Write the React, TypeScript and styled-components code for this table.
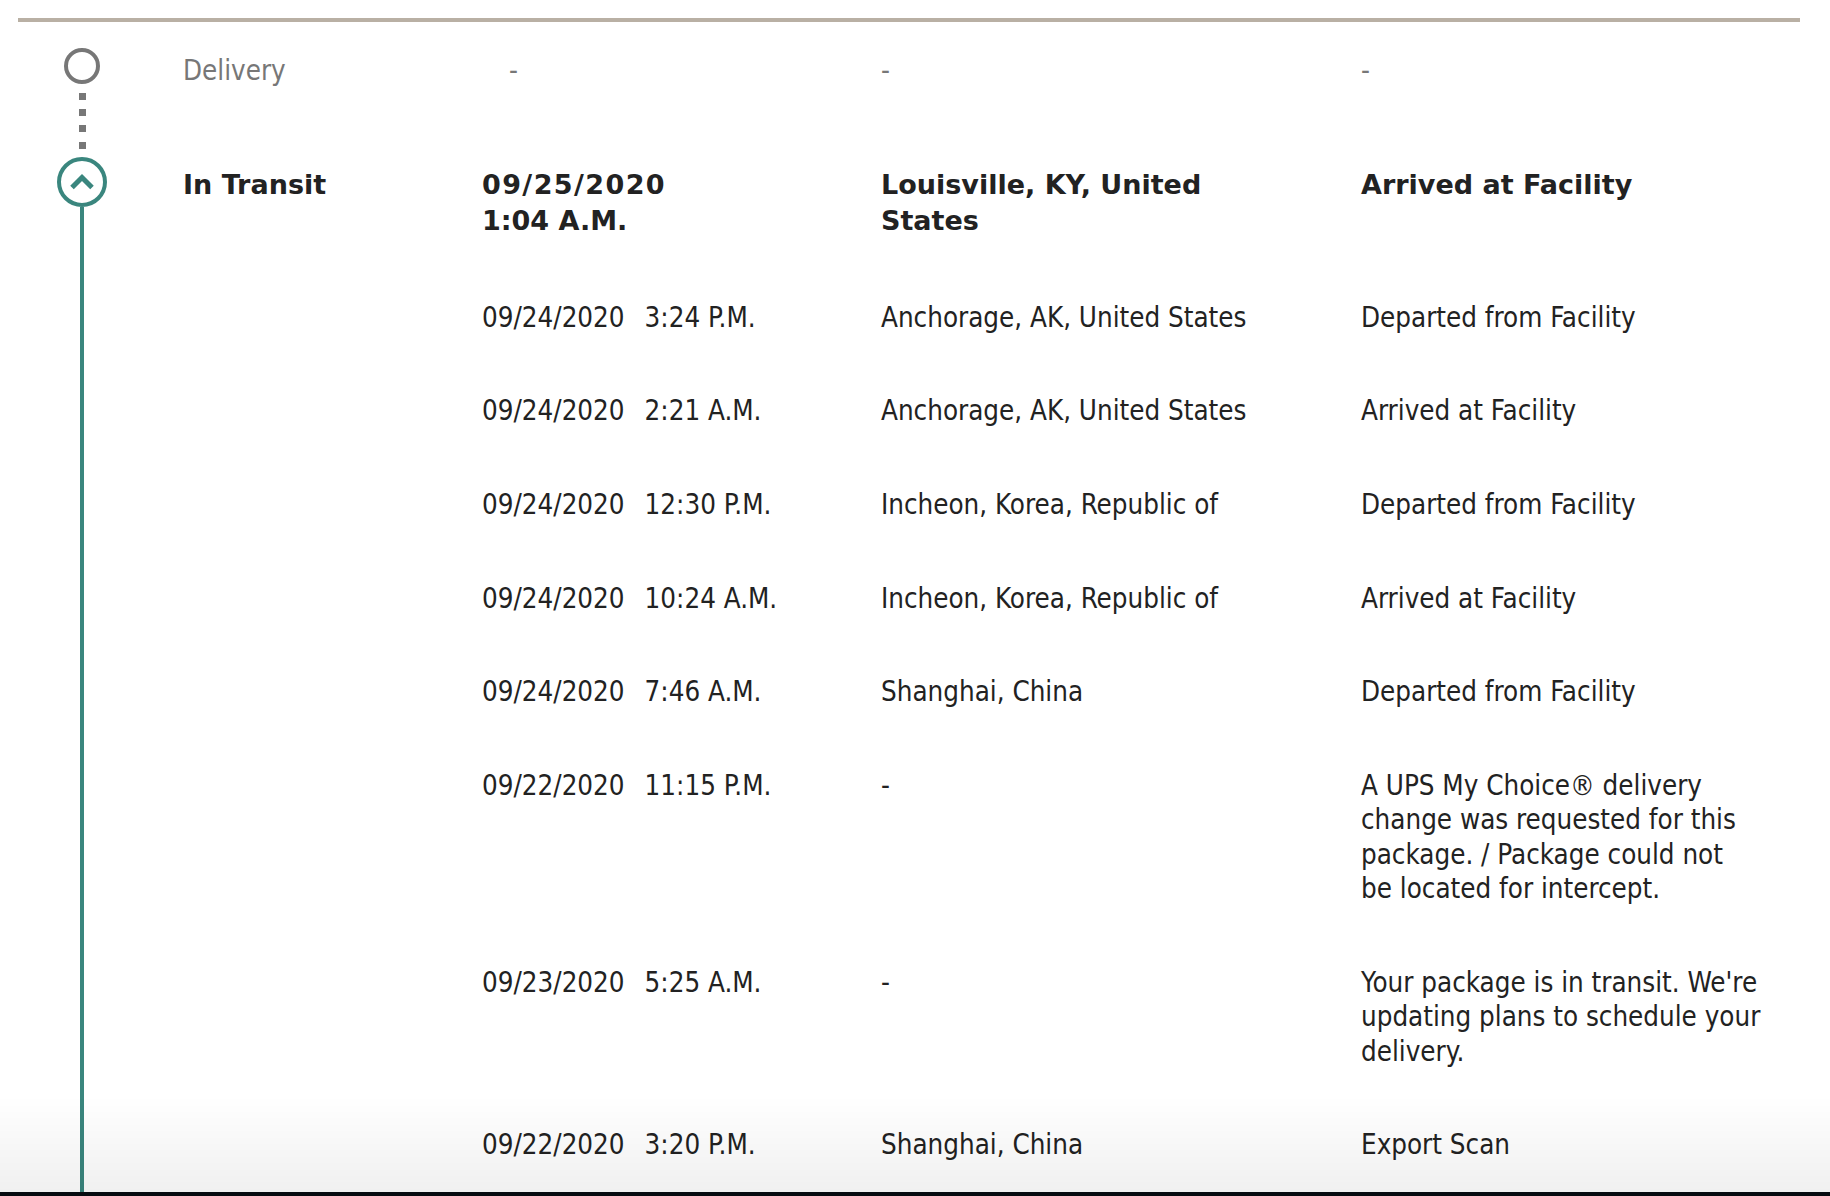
import styled, { createGlobalStyle } from 'styled-components';

const GlobalStyle = createGlobalStyle`
  html, body {
    margin: 0;
    padding: 0;
    background: #fff;
    overflow: hidden;
  }
`;

const Page = styled.main`
  padding: 18px 30px 0 18px;
  font-family: "DejaVu Sans Condensed", "DejaVu Sans", sans-serif;
  font-size: 27.5px;
  line-height: 34.4px;
  color: #222;
`;

const Rule = styled.hr`
  border: 0;
  height: 4px;
  margin: 0 0 26px;
  background: #b9b0a4;
`;

const Stage = styled.section`
  display: grid;
  grid-template-columns: 128px 336px 1fr;
  align-items: stretch;
`;

const Marker = styled.div`
  display: flex;
  flex-direction: column;
  align-items: center;
`;

const Connector = styled.span<{ $dotted?: boolean }>`
  flex: 1;
  width: ${({ $dotted }) => ($dotted ? '7px' : '4px')};
  background: ${({ $dotted }) =>
    $dotted
      ? 'repeating-linear-gradient(to bottom, transparent 0 8.7px, #777 8.7px 15.7px, transparent 15.7px 16.4px)'
      : '#3a867e'};
`;

const Status = styled.div<{ $top: number; $active?: boolean }>`
  padding: ${({ $top }) => $top}px 0 0 37px;
  font-family: ${({ $active }) => ($active ? '"DejaVu Sans", sans-serif' : 'inherit')};
  font-size: ${({ $active }) => ($active ? '27px' : 'inherit')};
  font-weight: ${({ $active }) => ($active ? 700 : 400)};
  line-height: ${({ $active }) => ($active ? '36px' : 'inherit')};
  color: ${({ $active }) => ($active ? '#222' : '#777')};
`;

const Events = styled.div<{ $top: number }>`
  padding-top: ${({ $top }) => $top}px;
`;

const EventRow = styled.div<{ $head?: boolean; $muted?: boolean; $pad?: number }>`
  display: grid;
  grid-template-columns: 399px 480px 1fr;
  padding-bottom: ${({ $pad }) => $pad ?? 59.3}px;
  font-family: ${({ $head }) => ($head ? '"DejaVu Sans", sans-serif' : 'inherit')};
  font-size: ${({ $head }) => ($head ? '27px' : 'inherit')};
  font-weight: ${({ $head }) => ($head ? 700 : 400)};
  line-height: ${({ $head }) => ($head ? '36px' : 'inherit')};
  color: ${({ $muted }) => ($muted ? '#777' : '#222')};
`;

const When = styled.div<{ $stack?: boolean; $indent?: number }>`
  display: flex;
  flex-direction: ${({ $stack }) => ($stack ? 'column' : 'row')};
  gap: ${({ $stack }) => ($stack ? '0' : '20px')};
  padding-left: ${({ $indent }) => $indent ?? 0}px;
`;

const Day = styled.span<{ $wide?: boolean }>`
  letter-spacing: ${({ $wide }) => ($wide ? '1.4px' : 'normal')};
`;

const Where = styled.div`
  padding-right: 60px;
`;

const What = styled.div`
  max-width: 420px;
  white-space: pre-line;
`;

const Fade = styled.div`
  position: fixed;
  left: 0;
  right: 0;
  bottom: 0;
  height: 100px;
  pointer-events: none;
  background: linear-gradient(to bottom, rgba(0, 0, 0, 0), rgba(0, 0, 0, 0.06));
  border-bottom: 4px solid #070b10;
  box-sizing: border-box;
`;

function OpenRing() {
  return (
    <svg width="36" height="36" viewBox="0 0 36 36">
      <circle cx="18" cy="18" r="16" fill="#fff" stroke="#777" strokeWidth="4" />
    </svg>
  );
}

function ActiveRing() {
  return (
    <svg width="50" height="50" viewBox="0 0 50 50">
      <circle cx="25" cy="25" r="23" fill="#fff" stroke="#3a867e" strokeWidth="4" />
      <polyline points="15,30.5 25,20.5 35,30.5" fill="none" stroke="#3a867e" strokeWidth="5" />
    </svg>
  );
}

type Scan = { date: string; time: string; place: string; activity: string };

const latest: Scan = {
  date: '09/25/2020',
  time: '1:04 A.M.',
  place: 'Louisville, KY, United States',
  activity: 'Arrived at Facility',
};

const history: Scan[] = [
  { date: '09/24/2020', time: '3:24 P.M.', place: 'Anchorage, AK, United States', activity: 'Departed from Facility' },
  { date: '09/24/2020', time: '2:21 A.M.', place: 'Anchorage, AK, United States', activity: 'Arrived at Facility' },
  { date: '09/24/2020', time: '12:30 P.M.', place: 'Incheon, Korea, Republic of', activity: 'Departed from Facility' },
  { date: '09/24/2020', time: '10:24 A.M.', place: 'Incheon, Korea, Republic of', activity: 'Arrived at Facility' },
  { date: '09/24/2020', time: '7:46 A.M.', place: 'Shanghai, China', activity: 'Departed from Facility' },
  {
    date: '09/22/2020',
    time: '11:15 P.M.',
    place: '-',
    activity:
      'A UPS My Choice® delivery\nchange was requested for this\npackage. / Package could not\nbe located for intercept.',
  },
  {
    date: '09/23/2020',
    time: '5:25 A.M.',
    place: '-',
    activity: "Your package is in transit. We're\nupdating plans to schedule your\ndelivery.",
  },
  { date: '09/22/2020', time: '3:20 P.M.', place: 'Shanghai, China', activity: 'Export Scan' },
];

export default function App() {
  return (
    <>
      <GlobalStyle />
      <Page>
        <Rule />

        <Stage>
          <Marker>
            <OpenRing />
            <Connector $dotted />
          </Marker>
          <Status $top={5}>Delivery</Status>
          <Events $top={5}>
            <EventRow $muted $pad={69.6}>
              <When $indent={27}>-</When>
              <Where>-</Where>
              <What>-</What>
            </EventRow>
          </Events>
        </Stage>

        <Stage>
          <Marker>
            <ActiveRing />
            <Connector />
          </Marker>
          <Status $top={10} $active>
            In Transit
          </Status>
          <Events $top={10}>
            <EventRow $head $pad={60.5}>
              <When $stack>
                <Day $wide>{latest.date}</Day>
                <span>{latest.time}</span>
              </When>
              <Where>{latest.place}</Where>
              <What>{latest.activity}</What>
            </EventRow>
            {history.map((s, i) => (
              <EventRow key={i}>
                <When>
                  <Day>{s.date}</Day>
                  <span>{s.time}</span>
                </When>
                <Where>{s.place}</Where>
                <What>{s.activity}</What>
              </EventRow>
            ))}
          </Events>
        </Stage>
      </Page>
      <Fade />
    </>
  );
}
